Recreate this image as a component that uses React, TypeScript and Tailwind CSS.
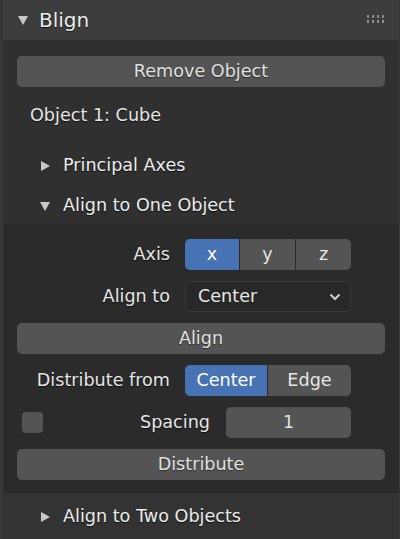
const font = { fontFamily: '"DejaVu Sans", "Liberation Sans", sans-serif' };

function Tri({ open }: { open: boolean }) {
  return (
    <svg width="12" height="12" viewBox="0 0 12 12" className="shrink-0">
      {open ? (
        <polygon points="1,2 11,2 6,11" fill="#c8c8c8" />
      ) : (
        <polygon points="2,1 11,6 2,11" fill="#c8c8c8" />
      )}
    </svg>
  );
}

function Btn({ label }: { label: string }) {
  return (
    <div className="flex h-[31px] items-center justify-center rounded-[5px] bg-[#545454] text-[#e0e0e0] [text-shadow:0_1px_1px_rgba(0,0,0,0.5)]">
      {label}
    </div>
  );
}

function Row({ label, children }: { label: string; children: React.ReactNode }) {
  return (
    <div className="flex items-center">
      <div className="w-[153px] text-right text-[#e6e6e6] [text-shadow:0_1px_1px_rgba(0,0,0,0.7)]">{label}</div>
      <div className="ml-[15px] w-[166px]">{children}</div>
    </div>
  );
}

function SubHeader({ label, open }: { label: string; open: boolean }) {
  return (
    <div className="flex h-[40px] items-center gap-[12px] pl-[36px] pt-[3px] text-[#ececec] [text-shadow:0_1px_1px_rgba(0,0,0,0.7)]">
      <Tri open={open} />
      <span>{label}</span>
    </div>
  );
}

export default function App() {
  return (
    <div className="h-[539px] w-[400px] overflow-hidden bg-[#383838] pl-[3px] pr-[1px] text-[17.6px]" style={font}>
      {/* header */}
      <div className="flex h-[40px] items-center bg-[#3d3d3d] pl-[14px] pr-[13px]">
        <Tri open />
        <span className="ml-[10px] text-[20px] text-[#ececec] [text-shadow:0_1px_1px_rgba(0,0,0,0.7)]">Blign</span>
        <svg width="19" height="9" viewBox="0 0 19 9" className="ml-auto mb-[2px]">
          {[0, 5, 10, 15].map((x) =>
            [0, 5].map((y) => <rect key={`${x}-${y}`} x={x} y={y} width="2" height="3" fill="#8c8c8c" />)
          )}
        </svg>
      </div>

      {/* body */}
      <div className="bg-[#303030] px-[14px] pt-[16px]">
        <div className="h-[30px]">
          <Btn label="Remove Object" />
        </div>
        <div className="mt-[8px] flex h-[40px] items-center pl-[13px] pt-[3px] text-[#e6e6e6] [text-shadow:0_1px_1px_rgba(0,0,0,0.7)]">
          Object 1: Cube
        </div>
        <div className="-mx-[14px] mt-[10px]">
          <SubHeader label="Principal Axes" open={false} />
          <SubHeader label="Align to One Object" open />
        </div>
      </div>

      {/* sub panel */}
      <div className="flex flex-col gap-[11px] bg-[#2b2b2b] px-[14px] pb-[13px] pt-[15px]">
        <Row label="Axis">
          <div className="flex h-[31px] gap-px overflow-hidden rounded-[5px] text-[#e6e6e6]">
            <div className="flex w-[54px] items-center justify-center bg-[#4772b3] text-white">x</div>
            <div className="flex flex-1 items-center justify-center bg-[#545454]">y</div>
            <div className="flex flex-1 items-center justify-center bg-[#545454]">z</div>
          </div>
        </Row>
        <Row label="Align to">
          <div className="flex h-[31px] items-center rounded-[5px] border border-[#3a3a3a] bg-[#282828] pl-[12px] pr-[9px] text-[#e6e6e6]">
            <span>Center</span>
            <svg width="12" height="8" viewBox="0 0 12 8" className="ml-auto">
              <polyline points="1.5,1.5 6,6 10.5,1.5" fill="none" stroke="#d0d0d0" strokeWidth="2" />
            </svg>
          </div>
        </Row>
        <Btn label="Align" />
        <Row label="Distribute from">
          <div className="flex h-[31px] gap-px overflow-hidden rounded-[5px] text-[#e6e6e6]">
            <div className="flex w-[82px] items-center justify-center bg-[#4772b3] text-white">Center</div>
            <div className="flex flex-1 items-center justify-center bg-[#545454]">Edge</div>
          </div>
        </Row>
        <div className="flex h-[31px] items-center">
          <div className="ml-[5px] h-[21px] w-[21px] rounded-[4px] bg-[#545454]" />
          <div className="ml-auto text-[#e6e6e6] [text-shadow:0_1px_1px_rgba(0,0,0,0.7)]">Spacing</div>
          <div className="ml-[16px] mr-[34px] flex h-[31px] w-[125px] items-center justify-center rounded-[5px] bg-[#545454] text-[#e0e0e0]">
            1
          </div>
        </div>
        <Btn label="Distribute" />
      </div>

      {/* bottom sub header */}
      <div className="h-[60px] bg-[#333333] pt-[2px]">
        <SubHeader label="Align to Two Objects" open={false} />
      </div>
    </div>
  );
}
